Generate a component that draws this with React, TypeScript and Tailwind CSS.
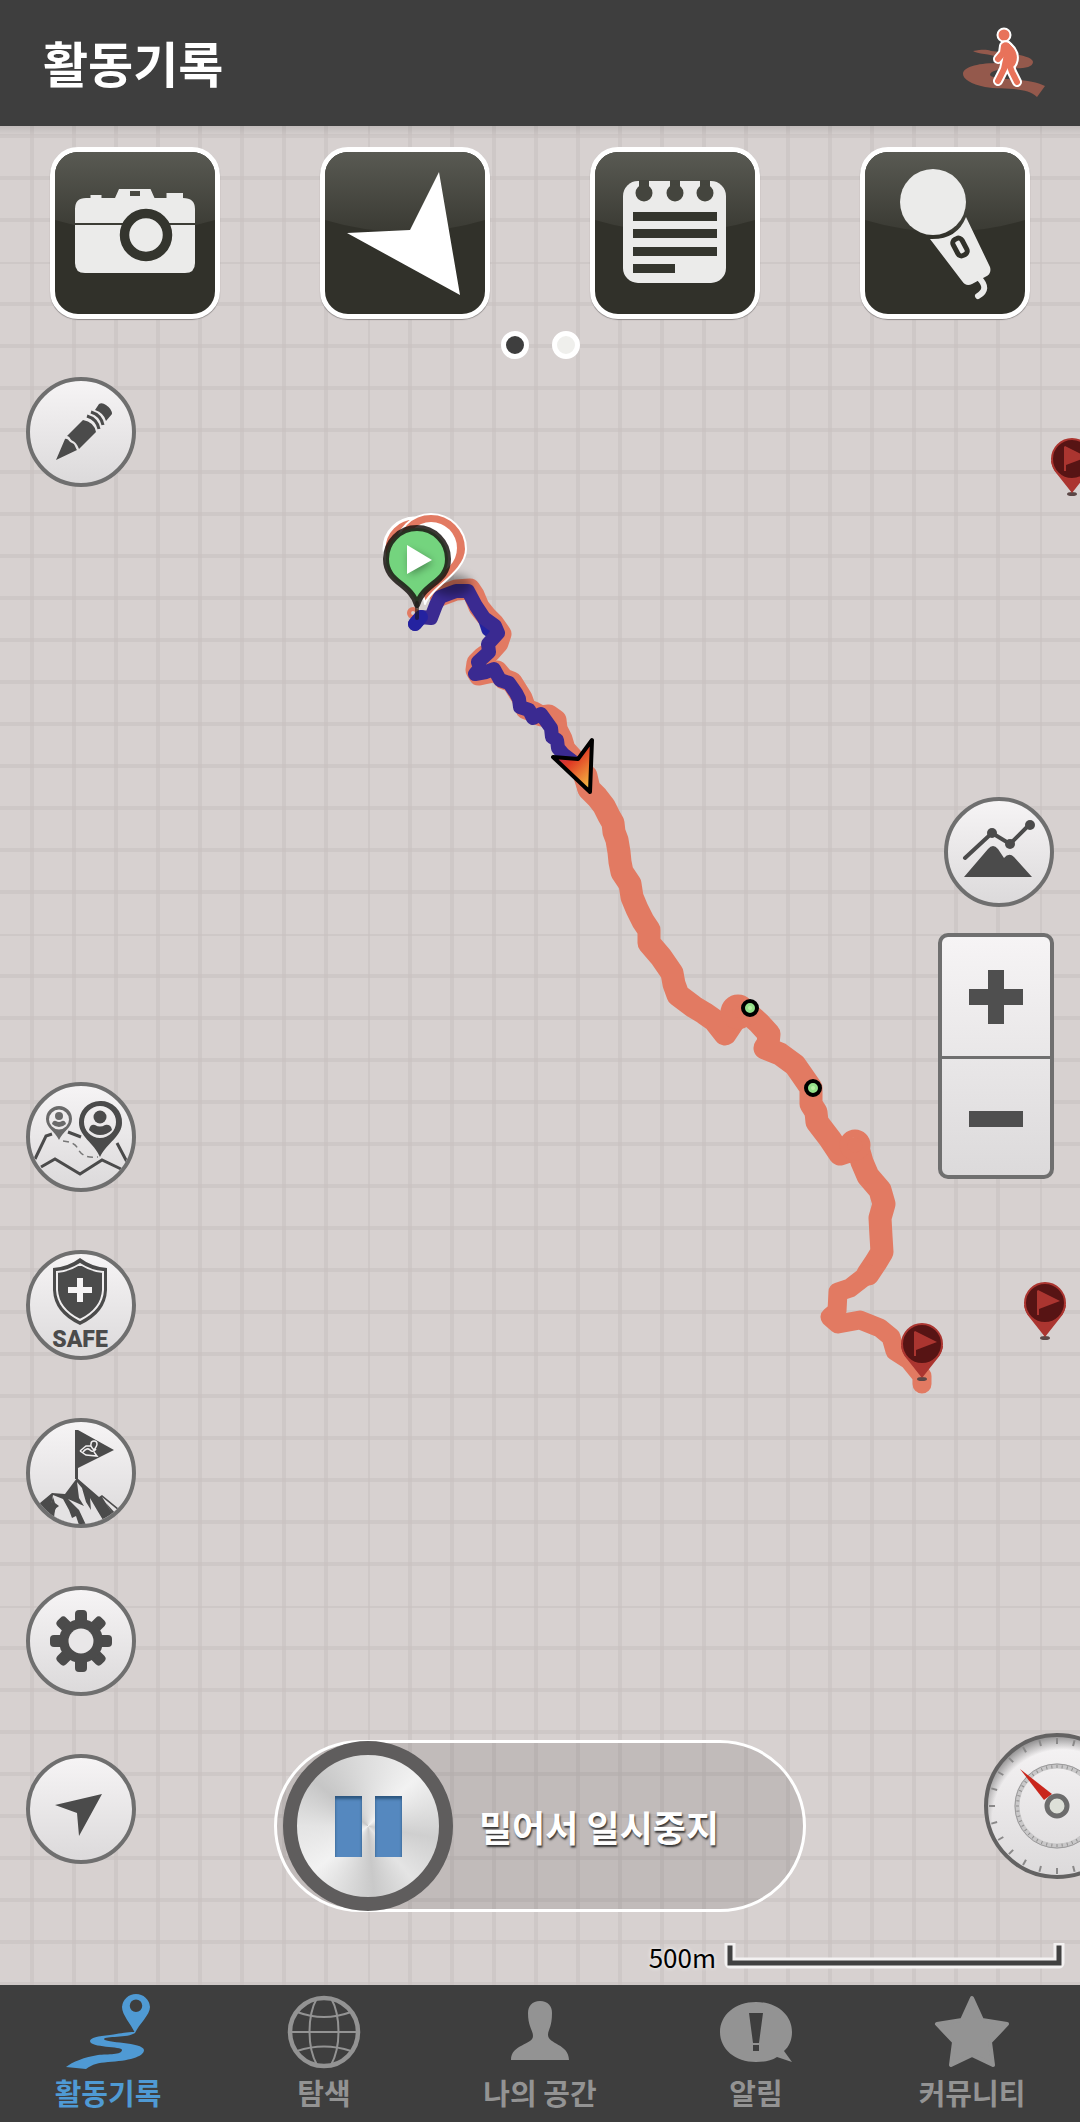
import type { ReactNode } from "react";

const TILE = 672;
const CELL = 42;

const TRACK_START =
  "M440 596 L456 590 L470 589 L474 595 L479 607 L487 617 L494 624 L501 634 L498 643 L490 652 L483 657 L477 663 L476 670 L479 675 L488 673 L497 671 L504 679 L512 682 L517 690 L522 698 L526 709 L534 712 L541 716 L549 715 L556 720 L557 729 L562 739 L565 749 L574 759 L582 770 L588 789";

const TRACK_MIDDLE =
  "M586 776 L589 789 L597 797 L604 806 L609 816 L613 823 L614 832 L617 840 L619 852 L620 862 L622 872 L630 884 L632 897 L637 909 L643 921 L649 930 L649 943 L661 957 L672 973 L674 984 L678 995 L694 1007 L704 1013 L714 1020 L725 1034 L733 1022 L735 1014 L750 1015 L759 1023 L769 1034 L768 1044 L765 1048 L780 1054 L795 1065 L802 1075 L811 1088 L811 1104 L816 1112 L817 1122 L830 1139 L840 1154 L858 1148 L862 1162 L868 1176 L880 1190 L884 1204 L880 1218 L881 1236 L882 1252 L876 1262 L868 1274";

const TRACK_END =
  "M868 1274 L850 1288 L838 1292 L837 1311 L830 1317 L838 1324 L860 1320 L880 1328 L891 1337 L895 1351 L909 1360 L922 1376 L922 1384";

const TRACK_DONE =
  "M415 624 L421 617 L431 618 L436 605 L440 597 L456 591 L468 591 L476 606 L484 618 L495 626 L498 633 L488 644 L489 652 L478 662 L480 668 L475 674 L486 672 L494 669 L500 680 L509 683 L516 693 L519 699 L520 707 L529 710 L533 718 L541 714 L551 728 L552 737 L557 740 L558 748 L563 754 L580 767";

const PINS = [
  { x: 1072, y: 459 },
  { x: 1045, y: 1303 },
  { x: 922, y: 1344 },
];

const WAYPOINTS = [
  { x: 750, y: 1008 },
  { x: 813, y: 1088 },
];

export default function App() {
  return (
    <div className="flex min-h-screen flex-col overflow-hidden bg-[#3e3e3e] font-['Noto_Sans_CJK_KR',sans-serif]">
      <header className="flex h-[126px] items-center justify-between pr-[33px] pb-[2px] pl-[43px]">
        <h1 className="text-[49px] leading-[56px] font-bold text-white">활동기록</h1>
        <button type="button" aria-label="걷기">
          <WalkIcon />
        </button>
      </header>

      <main className="relative isolate flex flex-1 flex-col overflow-hidden bg-[#d7d1d0]">
        <TrackMap />

        <div className="grid grid-cols-4 justify-items-center pt-[21px]">
          <ToolButton label="사진">
            <path
              fillRule="evenodd"
              fill="#ebebea"
              d="M20 57Q20 46 31 46H35.500V43H46.500V46H60L64 37H95.500L99.500 46H111.500V41H128V46Q140 46 140 57V71H20ZM75 39V44H85V39Z"
            />
            <path fill="#ebebea" d="M20 73H140V111Q140 121 130 121H30Q20 121 20 111Z" />
            <circle cx="91" cy="83" r="21.500" fill="#ebebea" stroke="#34352e" strokeWidth="9.500" />
          </ToolButton>
          <ToolButton label="방향">
            <path fill="#fff" d="M114 20L135 143L22 81L85 78Z" />
          </ToolButton>
          <ToolButton label="메모">
            <rect x="28" y="29" width="103" height="102" rx="15" fill="#ebebea" />
            <g fill="#44453e">
              {[49, 80, 110].map((x) => (
                <g key={x}>
                  <rect x={x - 5} y="28" width="10" height="10" />
                  <circle cx={x} cy="41" r="8.500" />
                </g>
              ))}
            </g>
            <g fill="#34352e">
              <rect x="38" y="60" width="84" height="9" />
              <rect x="38" y="77" width="84" height="9" />
              <rect x="38" y="95" width="84" height="9" />
              <rect x="38" y="112" width="42" height="9" />
            </g>
          </ToolButton>
          <ToolButton label="음성">
            <circle cx="68" cy="50" r="33" fill="#ebebea" />
            <path
              fill="#ebebea"
              d="M101 65L125 115Q127 122 120 125L107 132Q101 135 97 129L65 87Q92 88 101 65Z"
            />
            <rect
              x="90"
              y="86"
              width="10"
              height="18"
              rx="4"
              fill="#ebebea"
              stroke="#31312a"
              strokeWidth="5"
              transform="rotate(-28 95 95)"
            />
            <path d="M114 126Q125 137 113 144" fill="none" stroke="#ebebea" strokeWidth="6" strokeLinecap="round" />
          </ToolButton>
        </div>

        <div className="mt-3 flex justify-center gap-[23px]">
          <button
            type="button"
            aria-label="1 페이지"
            className="size-7 rounded-full border-[5px] border-white bg-[#3e3e3e]"
          />
          <button
            type="button"
            aria-label="2 페이지"
            className="size-7 rounded-full border-[5px] border-white bg-[#efefec]"
          />
        </div>

        <div className="grid flex-1 grid-cols-[1fr_auto_1fr]">
          <div className="flex flex-col items-start gap-[58px] pt-[18px] pb-12 pl-[26px]">
            <RoundButton label="그리기">
              <PencilIcon />
            </RoundButton>
            <div className="mt-auto">
              <RoundButton label="그룹">
                <GroupIcon />
              </RoundButton>
            </div>
            <RoundButton label="안전">
              <SafeIcon />
            </RoundButton>
            <RoundButton label="정상 인증">
              <SummitIcon />
            </RoundButton>
            <RoundButton label="설정">
              <GearIcon />
            </RoundButton>
            <RoundButton label="현재 위치">
              <path d="M76 40L29 51L51 59L53 82Z" />
            </RoundButton>
          </div>

          <div className="flex flex-col justify-end">
            <SlideToPause />
          </div>

          <div className="flex flex-col items-end pr-[26px] pb-8">
            <div className="mt-[438px]">
              <RoundButton label="고도">
                <ElevationIcon />
              </RoundButton>
            </div>
            <div className="mt-[26px] flex w-[116px] flex-col overflow-hidden rounded-[10px] border-4 border-[#6f6f6f] bg-linear-to-b from-[#f6f4f5] to-[#dcdadb]">
              <button
                type="button"
                aria-label="확대"
                className="flex h-[122px] items-center justify-center border-b-[3px] border-[#6f6f6f]"
              >
                <svg width="54" height="54" fill="#4f4f4f">
                  <path d="M19 0H35V19H54V35H35V54H19V35H0V19H19Z" />
                </svg>
              </button>
              <button type="button" aria-label="축소" className="flex h-[116px] items-center justify-center pt-1">
                <svg width="54" height="16" fill="#4f4f4f">
                  <rect width="54" height="16" />
                </svg>
              </button>
            </div>
            <button type="button" aria-label="계기판" className="mt-auto -mr-[77px]">
              <Gauge />
            </button>
          </div>
        </div>

        <div className="flex h-[73px] items-center justify-end gap-[8px] pt-4 pr-[15px]">
          <span className="text-[26px] leading-8 text-black text-shadow-[0_0_4px_#fff]">500m</span>
          <svg width="341" height="28" fill="none">
            <path d="M6 5V20H335V5" stroke="#f3f1f1" strokeWidth="11" strokeLinejoin="round" strokeLinecap="square" />
            <path d="M6 5V20H335V5" stroke="#414141" strokeWidth="5" strokeLinecap="square" />
          </svg>
        </div>
      </main>

      <nav className="grid h-[137px] grid-cols-5">
        <NavItem label="활동기록" active>
          <path
            fillRule="evenodd"
            d="M76 1A14 14 0 0 0 62 14C62 22 71 31 75 40C79 31 90 22 90 14A14 14 0 0 0 76 1ZM76 6.500A6 6 0 0 1 76 19A6 6 0 0 1 76 6.500Z"
          />
          <path d="M75 39C62 39 60 41 50 42C38 43 30 45 30 48C30 55 62 53 62 57C62 62 48 61 38 62C25 64 12 69 6 74L26 76C33 71 38 70 48 69C68 68 84 64 84 57C83 49 44 50 44 46C45 43 68 45 75 40Z" />
        </NavItem>
        <NavItem label="탐색">
          <g fill="none" stroke="currentColor" strokeWidth="2">
            <circle cx="48" cy="39" r="34" strokeWidth="4.500" />
            <path d="M41 5C31 23 31 54 41 72M55 5C65 23 65 54 55 72" />
            <path d="M21 19Q48 29 75 19M13 39H83M21 58Q48 49 75 58" />
          </g>
        </NavItem>
        <NavItem label="나의 공간">
          <path d="M48 8C40 8 36 13 36 20C36 34 41 37 41 43C41 52 19 51 19 67H77C77 51 56 51 56 42C56 37 60 34 60 20C60 13 56 8 48 8Z" />
        </NavItem>
        <NavItem label="알림">
          <path
            fillRule="evenodd"
            d="M48 9C27 9 12 22 12 39C12 56 27 69 48 69C56 69 63 68 69 64L84 69L76 58C81 54 84 47 84 39C84 22 69 9 48 9ZM41 20H55L51 50H45ZM45 52H51V58H45Z"
          />
        </NavItem>
        <NavItem label="커뮤니티">
          <path
            stroke="currentColor"
            strokeWidth="4"
            strokeLinejoin="round"
            d="M48 5L58 27L83 31L66 49L69 72L48 62L27 72L30 49L13 31L38 27Z"
          />
        </NavItem>
      </nav>
    </div>
  );
}

function TrackMap() {
  const lines = Array.from({ length: 15 }, (_, i) => (i + 1) * CELL - 2);

  return (
    <svg className="absolute inset-0 -z-10 size-full" role="img" aria-label="이동 경로">
      <defs>
        <pattern id="grid" x="368" y="136" width={TILE} height={TILE} patternUnits="userSpaceOnUse">
          <g fill="#c8c1c1" fillOpacity="0.6">
            <rect width="2" height={TILE} />
            <rect width={TILE} height="2" />
            {lines.map((offset) => (
              <g key={offset}>
                <rect x={offset} width="4" height={TILE} />
                <rect y={offset} width={TILE} height="4" />
              </g>
            ))}
          </g>
        </pattern>
        <linearGradient id="topShade" x1="0" y1="0" x2="0" y2="1">
          <stop offset="0" stopColor="#000" stopOpacity="0.1" />
          <stop offset="1" stopColor="#000" stopOpacity="0" />
        </linearGradient>
        <linearGradient id="heading" x1="0" y1="0" x2="0.7" y2="1">
          <stop offset="0.2" stopColor="#b8285a" />
          <stop offset="0.5" stopColor="#e03a24" />
          <stop offset="1" stopColor="#f2b040" />
        </linearGradient>
        <filter id="soft" x="-50%" y="-50%" width="200%" height="200%">
          <feGaussianBlur stdDeviation="4" />
        </filter>
      </defs>
      <rect width="100%" height="100%" fill="url(#grid)" />
      <rect width="100%" height="10" fill="url(#topShade)" />

      {/* track coordinates count from the top of the screen, header included */}
      <g transform="translate(0 -126)" fill="none" strokeLinecap="round" strokeLinejoin="round">
        <g stroke="#e27a62">
          <circle cx="413" cy="613" r="2" strokeWidth="8" />
          <path d={TRACK_START} strokeWidth="21" />
          <path d={TRACK_MIDDLE} strokeWidth="23" />
          <path d={TRACK_END} strokeWidth="19" />
          <circle cx="738" cy="1012" r="6" strokeWidth="23" />
          <circle cx="855" cy="1145" r="4" strokeWidth="23" />
        </g>
        <path d="M484 618L488 630" stroke="#2222a0" strokeWidth="13" />
        <path d={TRACK_DONE} stroke="#3a2a91" strokeWidth="14" />
        <path d="M415 624L421 617" stroke="#2422a0" strokeWidth="14" />

        <ellipse cx="452" cy="585" rx="20" ry="11" fill="#000" fillOpacity="0.35" filter="url(#soft)" />
        <circle cx="415" cy="549" r="31" fill="#e27a62" stroke="#fff" strokeWidth="3" />
        <path
          d="M431 514A35 35 0 0 0 396 549C396 572 422 578 425 604C430 588 466 572 466 549A35 35 0 0 0 431 514Z"
          fill="#e27a62"
          stroke="#fff"
          strokeWidth="2"
        />
        <circle cx="431" cy="548" r="26" fill="#fff" />
        <path
          d="M417 528A31 31 0 0 0 386 559C386 583 411 583 417 605C423 583 448 583 448 559A31 31 0 0 0 417 528Z"
          fill="#74d47e"
          stroke="#1a1512"
          strokeOpacity="0.85"
          strokeWidth="6"
        />
        <path d="M417 603V618" stroke="#1a1512" strokeOpacity="0.6" strokeWidth="4" />
        <path d="M409 550L433 562L410 575Z" fill="#000" fillOpacity="0.4" filter="url(#soft)" />
        <path d="M407 545L432 560L407 574Z" fill="#fff" />

        <path d="M553 757L578 759L592 740L590 792Z" fill="url(#heading)" stroke="#000" strokeWidth="4" />

        {WAYPOINTS.map((point) => (
          <g key={point.x}>
            <circle cx={point.x} cy={point.y} r="7" fill="#94e08a" stroke="#000" strokeWidth="4" />
            <circle cx={point.x} cy={point.y} r="2" fill="#b6f0a4" />
          </g>
        ))}

        {PINS.map((pin) => (
          <g key={pin.x} transform={`translate(${pin.x} ${pin.y})`}>
            <ellipse cy="35" rx="5" ry="2" fill="#5b4746" />
            <path d="M-21 2Q-20 9 -15 15L0 34L15 15Q20 9 21 2Z" fill="#ab3530" />
            <circle r="20" fill="#571414" stroke="#ab3530" strokeWidth="2" />
            <path d="M-8 -12V12L-6 12V6L15 -2L-7 -13Z" fill="#ab3530" />
          </g>
        ))}
      </g>
    </svg>
  );
}

function ToolButton({ label, children }: { label: string; children: ReactNode }) {
  return (
    <button
      type="button"
      aria-label={label}
      className="h-[172px] w-[170px] overflow-hidden rounded-[28px] border-[5px] border-white bg-[#31312a] shadow-[0_1px_1px_#8d8888]"
    >
      <svg viewBox="0 0 160 162" className="size-full">
        <defs>
          <linearGradient id="gloss" x1="0" y1="0" x2="0" y2="1">
            <stop offset="0" stopColor="#595a53" />
            <stop offset="1" stopColor="#3a3a33" />
          </linearGradient>
        </defs>
        <path d="M0 0H160V68Q80 92 0 68Z" fill="url(#gloss)" />
        {children}
      </svg>
    </button>
  );
}

function RoundButton({ label, children }: { label: string; children: ReactNode }) {
  return (
    <button
      type="button"
      aria-label={label}
      className="block size-[110px] overflow-hidden rounded-full border-4 border-[#6f6f6f] bg-linear-to-b from-[#f6f4f5] to-[#dcdadb]"
    >
      <svg viewBox="4 4 102 102" className="size-full" fill="#4b4b4b">
        {children}
      </svg>
    </button>
  );
}

function NavItem({ label, active = false, children }: { label: string; active?: boolean; children: ReactNode }) {
  return (
    <a href="#" className={`flex flex-col items-center pt-2 ${active ? "text-[#4f9ad4]" : "text-[#939393]"}`}>
      <svg width="96" height="80" fill="currentColor">
        {children}
      </svg>
      <span className="text-[29px] leading-[38px] font-bold">{label}</span>
    </a>
  );
}

function SlideToPause() {
  return (
    <label className="relative flex h-[172px] w-[532px] items-center rounded-full border-[3px] border-white bg-black/10 pl-[6px]">
      <span className="-my-[3px] flex size-[170px] items-center justify-center gap-[13px] rounded-full border-[14px] border-[#5f5d5d] bg-[conic-gradient(#dedede,#f2f2f2_45deg,#cfcfcf_100deg,#e4e4e4_140deg,#c9c9c9_175deg,#f2f2f2_230deg,#e4e4e4_270deg,#c6c6c6_310deg,#dedede)]">
        <span className="h-[61px] w-[27px] bg-[#5588bf] shadow-[inset_0_3px_3px_#2c567f]" />
        <span className="h-[61px] w-[27px] bg-[#5588bf] shadow-[inset_0_3px_3px_#2c567f]" />
      </span>
      <span className="pl-[26px] text-[36px] leading-[44px] font-bold text-white text-shadow-[1px_2px_2px_#333]">
        밀어서 일시중지
      </span>
      <input type="range" min="0" max="100" defaultValue="0" className="absolute inset-0 size-full opacity-0" />
    </label>
  );
}

function Gauge() {
  const ticks = Array.from({ length: 24 }, (_, i) => i * 15);
  const innerTicks = Array.from({ length: 48 }, (_, i) => i * 7.5);

  return (
    <svg width="148" height="148" fill="none">
      <defs>
        <linearGradient id="dial" x1="0" y1="0" x2="0" y2="1">
          <stop offset="0" stopColor="#f6f4f5" />
          <stop offset="1" stopColor="#dcdadb" />
        </linearGradient>
        <radialGradient id="dialShade" cx="0.54" cy="0.6" r="0.62">
          <stop offset="0.8" stopColor="#000" stopOpacity="0" />
          <stop offset="1" stopColor="#000" stopOpacity="0.5" />
        </radialGradient>
      </defs>
      <circle cx="74" cy="74" r="71" fill="url(#dial)" />
      <circle cx="74" cy="74" r="71" fill="url(#dialShade)" stroke="#636262" strokeWidth="4" />
      <circle cx="74" cy="74" r="40" stroke="#c9c8c9" strokeWidth="5" />
      <circle cx="74" cy="74" r="42" stroke="#9b9a9b" />
      {ticks.map((angle) => (
        <path key={angle} d="M74 6V12" stroke="#8a8989" strokeWidth="2" transform={`rotate(${angle} 74 74)`} />
      ))}
      {innerTicks.map((angle) => (
        <path key={angle} d="M74 33V36" stroke="#8f8e8e" transform={`rotate(${angle} 74 74)`} />
      ))}
      <path d="M37 37L69 62L61 68Z" fill="#c9261c" />
      <circle cx="74" cy="74" r="10" fill="#dde0d8" stroke="#6c6c6c" strokeWidth="5" />
    </svg>
  );
}

function WalkIcon() {
  const limbs = "M41 20L40 27L35 33M43 34L41 43L35 55M46 38L49 46L54 56";
  const torso = "M41 17Q45 16 47 19Q55 26 53 35Q52 40 48 42L40 40L41 30Z";

  return (
    <svg width="84" height="72" fill="none" strokeLinecap="round" strokeLinejoin="round">
      <path
        fill="#94594c"
        d="M10 25C18 24 22 23 28 25C50 27 70 30 70 36C70 42 58 43 46 42C36 43 27 45 27 49C30 55 66 51 82 60L74 71C62 60 38 64 22 61C8 58 0 53 0 48C0 40 18 37 36 37C38 36 38 33 34 31C28 28 14 28 10 25Z"
      />
      <circle cx="41" cy="9" r="6.500" fill="#e8725a" stroke="#fff" strokeWidth="2" />
      <path d={limbs} stroke="#fff" strokeWidth="10" />
      <path d={torso} stroke="#fff" strokeWidth="5" />
      <path d={limbs} stroke="#e8725a" strokeWidth="6" />
      <path d={torso} fill="#e8725a" stroke="#e8725a" />
    </svg>
  );
}

function PencilIcon() {
  return (
    <>
      <path d="M30 83L39 62C42 61 43 65 46 66C49 67 49 70 51 73Z" />
      <path d="M41 59L57 43Q68 45 70 55L53 72C51 67 49 65 47 64C44 63 44 59 41 59Z" />
      <path d="M61 39Q71 42 73 52M65 35Q75 38 77 48" fill="none" stroke="#4b4b4b" strokeWidth="3" />
      <path d="M69 33L73 27Q76 25 80 28Q86 32 86 37L80 44Q78 36 69 33Z" />
    </>
  );
}

function GroupIcon() {
  return (
    <>
      <g fill="none" stroke="#4b4b4b" strokeWidth="3">
        <path d="M9 77L20 54L26 52M42 50L55 55M91 61L101 80" />
        <path d="M15 85L29 77L54 92L76 78L95 87" />
        <path d="M37 59Q49 60 52 67Q57 77 72 75" strokeWidth="1.500" strokeDasharray="6 4" stroke="#777" />
      </g>
      <g fill="#6a6a6a">
        <path
          fillRule="evenodd"
          d="M33 24A13 13 0 0 0 20 37C20 46 29 49 33 58C37 49 46 46 46 37A13 13 0 0 0 33 24ZM33 27.500A10 10 0 0 1 33 47.500A10 10 0 0 1 33 27.500Z"
        />
        <circle cx="33" cy="34" r="4" />
        <path d="M26 42Q27 38 30 39Q33 41 36 39Q39 38 40 42Q37 45 33 45Q29 45 26 42Z" />
      </g>
      <path
        fillRule="evenodd"
        d="M74 19A21 21 0 0 0 53 41C53 54 68 61 74 75C81 61 96 54 96 41A21 21 0 0 0 74 19ZM74 24A16 16 0 0 1 74 56A16 16 0 0 1 74 24Z"
      />
      <circle cx="74" cy="35" r="6.500" />
      <path d="M63 48Q64 42 69 43Q74 46 79 43Q85 42 86 48Q81 53 74 53Q68 53 63 48Z" />
    </>
  );
}

function SafeIcon() {
  return (
    <>
      <path d="M54 8Q66 17 81 18V40Q80 63 54 75Q28 63 27 40V18Q42 17 54 8Z" />
      <path
        d="M54 14Q65 21 77 22V40Q76 59 54 70Q32 59 31 40V22Q43 21 54 14Z"
        fill="none"
        stroke="#f0eeef"
        strokeWidth="2"
      />
      <path d="M51 28H57V37H66V43H57V52H51V43H42V37H51Z" fill="#f6f4f5" />
      <text x="54" y="97" textAnchor="middle" className="font-[Roboto,sans-serif] text-[23px] font-black">
        SAFE
      </text>
    </>
  );
}

function SummitIcon() {
  return (
    <>
      <path d="M49 12L52 12L88 32L52 50V61H49Z" />
      <g fill="none" stroke="#f1eff0" strokeWidth="1.500">
        <path d="M54 33L60 28H65M54 33L60 37L71 38L68 34M57 34Q61 29 64 32T70 31" />
        <path d="M68 32Q64 28 65 26A3 3 0 0 1 71 26Q71 28 68 32Z" />
      </g>
      <path d="M51 60L39 76L26 75L8 90L30 106H62L96 104L98 95L76 77L73 79Z" />
      <g fill="#e4e2e3">
        <path d="M51 64L53 80L58 88L42 81L53 92L60 107L80 107L71 92L64 80L65 92L60 84L56 70Z" />
        <path d="M27 77L25 88L30 90L28 95L27 107H53L50 98L46 100L43 92L37 81Z" />
        <path d="M76 79L93 93L90 96L80 85L88 98Z" />
      </g>
      <path d="M27 79L29 85L33 88L29 91L28 100L23 96L24 88Z" />
    </>
  );
}

function GearIcon() {
  return (
    <>
      {[0, 45, 90, 135].map((angle) => (
        <rect key={angle} x="49" y="24" width="12" height="62" rx="4" transform={`rotate(${angle} 55 55)`} />
      ))}
      <circle cx="55" cy="55" r="22" />
      <circle cx="55" cy="55" r="12.500" fill="#e9e7e8" />
    </>
  );
}

function ElevationIcon() {
  return (
    <>
      <path d="M21 61L48 36L66 47L86 27" fill="none" stroke="#4b4b4b" strokeWidth="4" strokeLinecap="round" />
      <circle cx="48" cy="36" r="5" />
      <circle cx="66" cy="47" r="5" />
      <circle cx="86" cy="28" r="5" />
      <path d="M20 80L44 52Q49 46 54 52L60 61Q65 55 70 60L88 80Z" />
    </>
  );
}
